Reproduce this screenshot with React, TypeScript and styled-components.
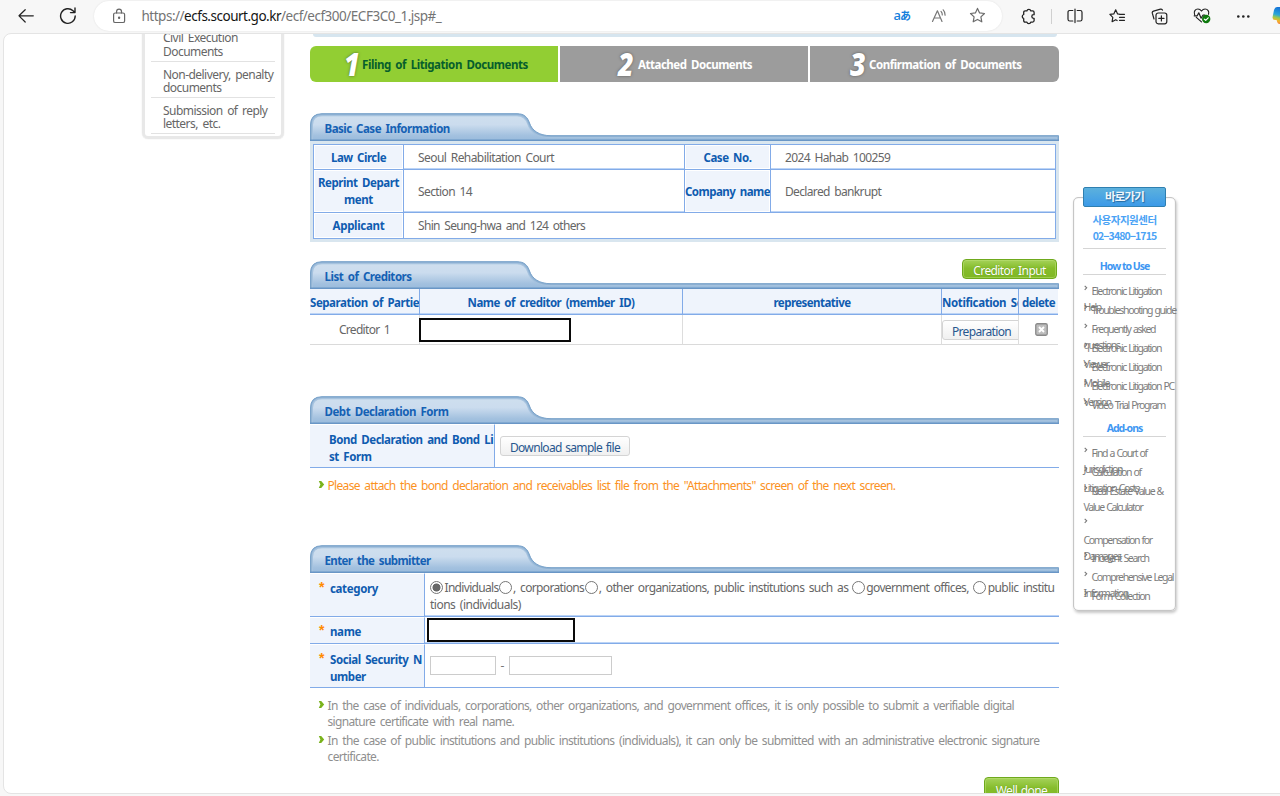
import React from "react";
import styled, { createGlobalStyle } from "styled-components";

const Global = createGlobalStyle`
  * { box-sizing: border-box; }
  body { margin: 0; background: #f7f7f7; font-family: "Noto Sans", "Noto Sans CJK KR", sans-serif; }
`;

const Window = styled.div`
  width: 1280px; height: 796px; overflow: hidden; background: #f7f7f7;
`;

/* ---------- browser bar ---------- */
const Bar = styled.header`
  height: 33px; display: flex; align-items: flex-start;
`;
const NavButtons = styled.div`
  width: 94px; height: 32px; padding-left: 18px; display: flex; flex: none; align-items: center; gap: 25px;
  svg { flex: none; }
`;
const Address = styled.div`
  width: 908px; height: 30px; flex: none; margin-top: 0.5px; border-radius: 15px; background: #fff;
  box-shadow: 0 0 2px rgba(0, 0, 0, 0.1); display: flex; align-items: center; padding: 0 16px 0 18px;
`;
const Url = styled.div`
  margin-left: 15.5px; flex: 1; font-size: 13.5px; letter-spacing: -0.49px; color: #747474; white-space: nowrap;
  b { font-weight: 400; color: #141414; }
`;
const Translate = styled.span`
  font: 500 13px/16px "Noto Sans", "Noto Sans CJK JP", sans-serif; color: #1580dc; letter-spacing: -1px;
  margin-right: 21px;
  small { font-size: 11px; font-weight: 700; }
`;
const AddressIcons = styled.div`
  display: flex; align-items: center; gap: 21px;
`;
const Tools = styled.div`
  display: flex; align-items: center; height: 32px; padding-left: 18px; flex: none;
  svg { flex: none; }
`;
const ToolSlot = styled.span<{ $w: number }>`
  width: ${(p) => p.$w}px; flex: none; display: flex; align-items: center;
`;
const Divider = styled.i`
  width: 1px; height: 15px; background: #d0d0d0; flex: none; margin-right: 15px;
`;

/* ---------- page ---------- */
const Page = styled.div`
  margin-left: 3px; width: 1290px; height: 761px; background: #fff; overflow: hidden;
  border: 1px solid #e4e4e4; border-radius: 8px 0 0 8px;
  display: flex; align-items: flex-start;
`;
const SideBox = styled.nav`
  margin: -12px 0 0 138px; width: 142px; border: 3px solid #e8e8e8; border-radius: 6px;
  padding: 0.5px 6px 2px; flex: none; box-shadow: 0 0 1px #ccc;
`;
const SideItem = styled.div`
  height: 36.3px; padding: 5.8px 0 0 12px; border-bottom: 1px solid #e2e2e2;
  font-size: 12px; line-height: 13.5px; word-spacing: 2px; letter-spacing: -0.54px; color: #666; white-space: nowrap;
`;
const Main = styled.main`
  margin-left: 26px; width: 749px; flex: none; display: flex; flex-direction: column;
`;
const Strip = styled.div`
  height: 2.5px; margin: 0 2px 0 3px; background: #d6e5ef; border-radius: 0 0 4px 4px;
`;
const Steps = styled.div`
  display: flex; gap: 2px; margin-top: 9.5px; height: 36px;
`;
const Step = styled.div<{ $active?: boolean; $pad: number; $w: number }>`
  width: ${(p) => p.$w}px; padding-left: ${(p) => p.$pad}px; display: flex; align-items: center;
  background: ${(p) => (p.$active ? "#92ce33" : "#9c9c9c")};
  color: ${(p) => (p.$active ? "#065e2c" : "#fff")};
  &:first-child { border-radius: 6px 0 0 6px; }
  &:last-child { border-radius: 0 6px 6px 0; }
`;
const StepNumber = styled.span<{ $w: number }>`
  width: ${(p) => p.$w}px; flex: none; font: italic 800 31px/34px "Open Sans", sans-serif; color: #fff;
  text-shadow: 0 0 3px rgba(50, 50, 50, 0.65); transform: scaleX(0.87); transform-origin: 0 50%;
`;

const Text = styled.span<{ $ls: number }>`
  font-size: 12px; line-height: 17px; word-spacing: 2px; white-space: nowrap;
  letter-spacing: ${(p) => p.$ls}px;
`;
const Bold = styled(Text)`
  font-weight: 700; font-size: 11.5px;
`;

const TabWrap = styled.div<{ $mt: number }>`
  margin-top: ${(p) => p.$mt}px; height: 28px; position: relative; flex: none;
  svg { display: block; }
`;
const TabTitle = styled.div`
  position: absolute; left: 14.5px; top: 7.4px; color: #1561b4; line-height: 17px; display: flex;
`;
const GreenButton = styled.button<{ $w: number; $h: number }>`
  width: ${(p) => p.$w}px; height: ${(p) => p.$h}px; flex: none; padding: 3px 0 0; border: 1px solid #6fa91d; border-radius: 4px;
  background: linear-gradient(#a5d25a, #86bd2c 45%, #7fb824); box-shadow: inset 0 0 0 1px rgba(190, 225, 120, 0.5);
  font: 400 12px/16px "Noto Sans", sans-serif; letter-spacing: -0.6px; word-spacing: 1px; color: #fff; white-space: nowrap;
  text-shadow: 0 0 1px rgba(70, 110, 0, 0.6);
`;
const TabButton = styled.div`
  position: absolute; right: 2px; top: -2px; display: flex;
`;

const line = "#82abe8";
const soft = "#bcd4f6";

const CaseFrame = styled.section`
  background: #d9e6ef; padding: 3px 3px 3px 3px; height: 101px;
`;
const CaseGrid = styled.div`
  border: 1px solid ${line}; background: #fff; height: 95px; width: 743px;
  display: grid; grid-template-columns: 90px 280px 87px 1fr; grid-template-rows: 25px 43px 25px;
`;
const Label = styled.div<{ $last?: boolean; $edge?: boolean }>`
  background: #eff4fc; color: #0f5cb0; display: flex; align-items: center; justify-content: center; text-align: center;
  border-right: 1px solid ${line}; border-bottom: ${(p) => (p.$last ? 0 : 1)}px solid ${line};
  border-left: ${(p) => (p.$edge ? 1 : 0)}px solid ${line};
  box-shadow: inset 0 0 0 1px #fff; overflow: hidden;
`;
const Value = styled.div<{ $last?: boolean; $wide?: boolean }>`
  grid-column: ${(p) => (p.$wide ? "span 3" : "auto")}; color: #666; display: flex; align-items: center; padding-left: 14px;
  border-bottom: ${(p) => (p.$last ? 0 : 1)}px solid ${line};
  box-shadow: inset 0 ${(p) => (p.$last ? 0 : -1)}px 0 ${soft};
`;

const Creditors = styled.section`
  display: grid; grid-template-columns: 110px 263px 259px 77px 39px; width: 748px;
`;
const HeadCell = styled.div<{ $last?: boolean; $start?: boolean }>`
  height: 26px; background: #eff4fc; color: #0f5cb0; display: flex; align-items: center; overflow: hidden;
  justify-content: ${(p) => (p.$start ? "flex-start" : "center")}; padding-top: 1px;
  border-right: ${(p) => (p.$last ? 0 : 1)}px solid ${line}; border-bottom: 1px solid ${line};
  box-shadow: inset 0 -1px 0 ${soft};
`;
const BodyCell = styled.div<{ $last?: boolean; $left?: boolean; $open?: boolean }>`
  height: 30px; color: #666; display: flex; align-items: center; overflow: ${(p) => (p.$open ? "visible" : "hidden")};
  justify-content: ${(p) => (p.$left ? "flex-start" : "center")}; padding-left: ${(p) => (p.$last ? 5 : 0)}px;
  border-right: ${(p) => (p.$last ? 0 : 1)}px solid #ddd; border-bottom: 1px solid #dadada;
`;
const Redacted = styled.div<{ $w: number; $h: number; $ml?: number }>`
  width: ${(p) => p.$w}px; height: ${(p) => p.$h}px; flex: none; background: #fff; border: 2px solid #0a0a0a;
  margin-left: ${(p) => p.$ml ?? 0}px;
`;
const GrayButton = styled.button<{ $w: number; $h: number; $ls: number }>`
  width: ${(p) => p.$w}px; height: ${(p) => p.$h}px; flex: none; padding: 3px 0 0; border: 1px solid #d4d4d4; border-radius: 3px;
  background: linear-gradient(#fff, #f0f0f0); color: #28578f; white-space: nowrap;
  font: 400 12px/16px "Noto Sans", sans-serif; letter-spacing: ${(p) => p.$ls}px; word-spacing: 1px;
`;

const FormRow = styled.div<{ $h: number; $label: number; $last?: boolean }>`
  display: grid; grid-template-columns: ${(p) => p.$label}px 1fr; height: ${(p) => p.$h}px;
  border-bottom: 1px solid ${line}; box-shadow: inset 0 ${(p) => (p.$last ? 0 : -1)}px 0 ${soft};
`;
const FormLabel = styled.div<{ $pt: number; $pl: number }>`
  background: #eff4fc; color: #0f5cb0; border-right: 1px solid ${line}; padding: ${(p) => p.$pt}px 0 0 ${(p) => p.$pl}px;
  display: flex; align-items: flex-start; overflow: hidden; border-top: 1px solid #fff;
`;
const Required = styled.span`
  width: 11px; flex: none; color: #ff8c00; font: 700 14px/15px "Liberation Sans", sans-serif;
`;
const FormValue = styled.div<{ $pl: number }>`
  padding-left: ${(p) => p.$pl}px; color: #666; display: flex; align-items: center;
`;
const Radios = styled.div`
  display: flex; flex-direction: column; align-self: flex-start; padding-top: 6px;
`;
const RadioLine = styled.div`
  display: flex; align-items: center; height: 17px;
`;
const Radio = styled.i<{ $on?: boolean; $l?: number; $r?: number }>`
  width: 13px; height: 13px; flex: none; border: 1px solid #767676; border-radius: 50%;
  margin: 0 ${(p) => p.$r ?? 1}px 0 ${(p) => p.$l ?? 0.5}px;
  background: ${(p) => (p.$on ? "radial-gradient(circle, #666 0 3.6px, #fff 4.4px)" : "#fff")};
`;
const Field = styled.input<{ $w: number }>`
  width: ${(p) => p.$w}px; height: 19px; border: 1px solid #ccc; background: #fff; padding: 0;
`;
const Dash = styled.span`
  width: 13px; text-align: center; font-size: 12px; color: #777;
`;
const Note = styled.div<{ $mt: number; $color: string }>`
  margin-top: ${(p) => p.$mt}px; padding-left: 8px; display: flex; align-items: flex-start; color: ${(p) => p.$color};
  svg { flex: none; margin: 3px 2.5px 0 0; }
  span { line-height: 16px; }
`;
const Submit = styled.div`
  display: flex; justify-content: flex-end; margin-top: 12px;
`;

/* ---------- quick menu ---------- */
const Quick = styled.aside`
  margin: 163px 0 0 14px; width: 103px; height: 414px; flex: none; position: relative; padding: 14px 9px 0;
  border: 1px solid #c6c6c6; border-radius: 5px; box-shadow: 1px 2px 3px rgba(0, 0, 0, 0.22), inset 0 0 1px #bbb;
`;
const QuickBadge = styled.div`
  position: absolute; left: 9px; top: -11px; width: 83px; height: 20px; border: 1px solid #2f7fb0; border-radius: 2px;
  background: linear-gradient(#5cb1dd, #3c9ae8); color: #eef6fb; text-align: center; text-shadow: 1px 1px 1px #2568a0;
  font: 700 11.5px/17px "Noto Sans CJK KR", sans-serif; letter-spacing: -0.8px;
`;
const Support = styled.div`
  text-align: center; font: 700 10.5px/16px "Noto Sans CJK KR", sans-serif; color: #4ba3f5; letter-spacing: -0.5px;
  border-bottom: 1px solid #d5d5d5; height: 37px; white-space: nowrap;
  span { letter-spacing: -0.9px; }
`;
const QuickTitle = styled.div<{ $h: number }>`
  height: ${(p) => p.$h}px; border-bottom: 1px solid #d5d5d5; display: flex; align-items: flex-end; justify-content: center;
  font: 700 10.5px/15px "Noto Sans", sans-serif; letter-spacing: -1px; color: #3f97f2; margin-bottom: 8px;
`;
const QuickItem = styled.div<{ $h?: number }>`
  height: ${(p) => p.$h ?? 19}px; font-size: 10.5px; line-height: 16px; letter-spacing: -1.36px; color: #7d7d7d; white-space: nowrap;
  word-spacing: 1px; padding-left: 0.5px; display: flex; align-items: flex-start;
  svg { flex: none; margin: 2px -4px 0 0; }
`;
const QuickLines = styled.div`
  overflow: visible; width: 90px; text-indent: 8px; p { margin: 0; text-indent: 0; }
`;

/* ---------- drawings ---------- */
const ink = { fill: "none", stroke: "#222", strokeWidth: 1.2, strokeLinecap: "round" as const, strokeLinejoin: "round" as const };

const BackIcon = () => (
  <svg width="16" height="16" viewBox="0 0 16 16" {...ink}><path d="M15.3 7.8H1M7.2 1.7 1 7.8l6.2 6.2" /></svg>
);
const ReloadIcon = () => (
  <svg width="18" height="18" viewBox="0 0 18 18" {...ink} strokeWidth={1.4}><path d="M16.2 9A7.3 7.3 0 1 1 14 3.8l1.8 1.7M16 1v4.6h-4.5" /></svg>
);
const LockIcon = () => (
  <svg width="14" height="16" viewBox="0 0 14 16" {...ink} stroke="#666"><rect x="1.6" y="5" width="11" height="9.5" rx="1.6" /><path d="M4.6 5V3.5a2.4 2.4 0 0 1 4.9 0V5" /><circle cx="7.1" cy="9.8" r=".6" fill="#666" /></svg>
);
const ReadIcon = () => (
  <svg width="17" height="16" viewBox="0 0 17 16" {...ink} stroke="#777"><path d="M1.5 13.5 6.4 2.8l4.6 10.7M3.3 10h6.1M10 3.4q1.4 1.5 1.3 3.6M12.2 1.8q2.1 2.2 1.9 5.4" /></svg>
);
const StarIcon = () => (
  <svg width="17" height="17" viewBox="0 0 17 17" {...ink} stroke="#6b6b6b"><path d="M8.5 1.4l2.1 4.5 4.9.6-3.6 3.4.9 4.9-4.3-2.4-4.3 2.4.9-4.9L1.5 6.5l4.9-.6z" /></svg>
);
const PuzzleIcon = () => (
  <svg width="17" height="17" viewBox="0 0 17 17" {...ink} strokeWidth={1.3}>
    <path d="M5.2 2.9H6.9a2 2 0 0 1 3.9 0h1.8q1.5 0 1.5 1.5v2.3h-.5a1.8 1.8 0 0 0 0 3.6h.5v2.3q0 1.500-1.500 1.500h-1.800a2 2 0 0 1-3.900 0H5.200q-1.500 0-1.500-1.500V10.500a2.100 2.100 0 0 1 0-4V4.400q0-1.500 1.500-1.500z" />
  </svg>
);
const SplitIcon = () => (
  <svg width="16" height="16" viewBox="0 0 16 16" {...ink}><path d="M5.8 2.5H2.8Q1 2.5 1 4.3v6.9Q1 13 2.8 13h3M10.2 2.5h3q1.8 0 1.8 1.8v6.9q0 1.8-1.8 1.8h-3M8 1v13.6" /></svg>
);
const FavoritesIcon = () => (
  <svg width="17" height="16" viewBox="0 0 17 16" {...ink}><path d="M10.2 6.2 8.6 5.9 6.7 1.8 4.8 5.9.9 6.4l2.9 2.9-.7 4.4 3.6-2 1.4.8M10.5 6.3h5M10.5 9.3h5M10.5 12.3h5" /></svg>
);
const CollectionsIcon = () => (
  <svg width="17" height="17" viewBox="0 0 17 17" {...ink}><rect x="5" y="5" width="10.8" height="10.8" rx="2.2" /><path d="M10.4 7.8v5.2M7.8 10.4H13M3 11 1.3 5.2q-.4-1.6 1.2-2.1l7-2q1.6-.4 2 1.1" /></svg>
);
const HealthIcon = () => (
  <svg width="19" height="18" viewBox="0 0 19 18" {...ink}>
    <path d="M1.6 7.6C.4 4.5 2.4 2 4.9 2 6.5 2 7.6 2.8 8.5 4c.9-1.2 2-2 3.6-2 2.5 0 4.5 2.5 3.4 5.3M3.3 10.4 8.5 14.9M1.2 8.8h3l1.6-3 2.3 5.4 1.8-3h2" />
    <circle cx="13.2" cy="12" r="4.2" fill="#0e7a0d" stroke="none" /><path d="m11.3 12.1 1.4 1.3 2.5-2.6" stroke="#fff" />
  </svg>
);
const DotsIcon = () => (
  <svg width="15" height="5" viewBox="0 0 15 5"><g fill="#222"><circle cx="2.3" cy="2.5" r="1.3" /><circle cx="7.3" cy="2.5" r="1.3" /><circle cx="12.3" cy="2.5" r="1.3" /></g></svg>
);
const CopilotIcon = () => (
  <svg width="18" height="20" viewBox="0 0 18 20">
    <defs><linearGradient id="cp" x1="0.2" y1="0" x2="0" y2="1"><stop offset="0" stopColor="#1675d8" /><stop offset=".4" stopColor="#2aa6d9" /><stop offset=".58" stopColor="#9cc94c" /><stop offset=".75" stopColor="#f6b429" /><stop offset="1" stopColor="#f0604c" /></linearGradient></defs>
    <path d="M5 1h9l-3 17H7.5q-1.8 0-2.3-2L4.600 14H3Q.2 14 .6 11L2 4Q2.800 1 5 1z" fill="url(#cp)" />
  </svg>
);
const CheckArrow = () => (
  <svg width="7" height="8" viewBox="0 0 7 8"><path d="M.8 0h2.4L6.2 3.5 3.2 7H.8l1.6-3.5z" fill="#7ab31c" /></svg>
);
const SmallArrow = () => (
  <svg width="4" height="6" viewBox="0 0 4 6"><path d="M.7.8 2.7 2.8.7 4.8" fill="none" stroke="#777" strokeWidth="1.1" /></svg>
);
const DeleteIcon = () => (
  <svg width="13" height="13" viewBox="0 0 13 13"><rect x=".75" y=".75" width="11.5" height="11.5" rx="1.5" fill="#bdbdbd" stroke="#8a8a8a" strokeWidth="1.3" /><path d="m4 4 5 5M9 4 4 9" stroke="#fff" strokeWidth="1.9" /></svg>
);

const tabPath = "M.5 28V12Q.5 .7 12 .7H207C214 .7 217.5 4 219.5 10 222 17.5 229 22.7 241 22.7H748.5V28";
function Tab({ title, mt, ls, children }: { title: string; mt: number; ls: number; children?: React.ReactNode }) {
  return (
    <TabWrap $mt={mt}>
      <svg width="749" height="28" viewBox="0 0 749 28">
        <defs>
          <linearGradient id="tab" x1="0" y1="0" x2="0" y2="1"><stop offset="0" stopColor="#cfdfee" /><stop offset=".4" stopColor="#cbdcee" /><stop offset=".8" stopColor="#a3c1df" /><stop offset="1" stopColor="#98badc" /></linearGradient>
          <clipPath id="tabclip"><path d={tabPath + "z"} /></clipPath>
        </defs>
        <path d={tabPath + "z"} fill="url(#tab)" />
        <g clipPath="url(#tabclip)" fill="none">
          <path d={tabPath} stroke="#a5c2de" strokeWidth="5" />
          <path d={tabPath} stroke="#8fb2d4" strokeWidth="2.6" />
        </g>
        <path d={tabPath} fill="none" stroke="#7aa3ca" strokeWidth="1" />
        <path d="M0 27.2H749" stroke="#6996c6" strokeWidth="1.5" />
      </svg>
      <TabTitle><Bold $ls={ls}>{title}</Bold></TabTitle>
      {children}
    </TabWrap>
  );
}

function Item({ first, rest, h }: { first: string; rest?: string[]; h?: number }) {
  return (
    <QuickItem $h={h}>
      <SmallArrow />
      <QuickLines>{first || "\u00a0"}{(rest ?? []).map((r) => <p key={r}>{r}</p>)}</QuickLines>
    </QuickItem>
  );
}

export default function App() {
  return (
    <Window>
      <Global />
      <Bar>
        <NavButtons><BackIcon /><ReloadIcon /></NavButtons>
        <Address>
          <LockIcon />
          <Url>https://<b>ecfs.scourt.go.kr</b>/ecf/ecf300/ECF3C0_1.jsp#_</Url>
          <Translate>a<small>あ</small></Translate>
          <AddressIcons><ReadIcon /><StarIcon /></AddressIcons>
        </Address>
        <Tools>
          <ToolSlot $w={31}><PuzzleIcon /></ToolSlot>
          <Divider />
          <ToolSlot $w={42}><SplitIcon /></ToolSlot>
          <ToolSlot $w={42}><FavoritesIcon /></ToolSlot>
          <ToolSlot $w={42}><CollectionsIcon /></ToolSlot>
          <ToolSlot $w={43}><HealthIcon /></ToolSlot>
          <ToolSlot $w={36}><DotsIcon /></ToolSlot>
          <CopilotIcon />
        </Tools>
      </Bar>
      <Page>
        <SideBox>
          <SideItem>Civil Execution<br />Documents</SideItem>
          <SideItem>Non-delivery, penalty<br />documents</SideItem>
          <SideItem>Submission of reply<br />letters, etc.</SideItem>
        </SideBox>
        <Main>
          <Strip />
          <Steps>
            <Step $w={248} $pad={34} $active><StepNumber $w={18}>1</StepNumber><Bold $ls={-0.43}>Filing of Litigation Documents</Bold></Step>
            <Step $w={248} $pad={58}><StepNumber $w={20}>2</StepNumber><Bold $ls={-0.48}>Attached Documents</Bold></Step>
            <Step $w={249} $pad={40}><StepNumber $w={19}>3</StepNumber><Bold $ls={-0.42}>Confirmation of Documents</Bold></Step>
          </Steps>

          <Tab title="Basic Case Information" mt={31} ls={-0.51} />
          <CaseFrame>
            <CaseGrid>
              <Label><Bold $ls={-0.51}>Law Circle</Bold></Label>
              <Value><Text $ls={-0.58}>Seoul Rehabilitation Court</Text></Value>
              <Label $edge><Bold $ls={-0.46}>Case No.</Bold></Label>
              <Value><Text $ls={-0.64}>2024 Hahab 100259</Text></Value>
              <Label><Bold $ls={-0.45}>Reprint Depart<br />ment</Bold></Label>
              <Value><Text $ls={-0.6}>Section 14</Text></Value>
              <Label $edge><Bold $ls={-0.53}>Company name</Bold></Label>
              <Value><Text $ls={-0.65}>Declared bankrupt</Text></Value>
              <Label $last><Bold $ls={-0.3}>Applicant</Bold></Label>
              <Value $last $wide><Text $ls={-0.67}>Shin Seung-hwa and 124 others</Text></Value>
            </CaseGrid>
          </CaseFrame>

          <Tab title="List of Creditors" mt={19} ls={-0.48}>
            <TabButton><GreenButton $w={95} $h={20}>Creditor Input</GreenButton></TabButton>
          </Tab>
          <Creditors>
            <HeadCell $start><Bold $ls={-0.46}>Separation of Parties</Bold></HeadCell>
            <HeadCell><Bold $ls={-0.5}>Name of creditor (member ID)</Bold></HeadCell>
            <HeadCell><Bold $ls={-0.55}>representative</Bold></HeadCell>
            <HeadCell $start><Bold $ls={-0.38}>Notification Service</Bold></HeadCell>
            <HeadCell $last><Bold $ls={-0.53}>delete</Bold></HeadCell>
            <BodyCell><Text $ls={-0.7}>Creditor 1</Text></BodyCell>
            <BodyCell $left $open><Redacted $w={152} $h={24} $ml={-1} /></BodyCell>
            <BodyCell />
            <BodyCell $left><GrayButton $w={79} $h={20} $ls={-0.67}>Preparation</GrayButton></BodyCell>
            <BodyCell $last><DeleteIcon /></BodyCell>
          </Creditors>

          <Tab title="Debt Declaration Form" mt={51} ls={-0.47} />
          <FormRow $h={44} $label={185} $last>
            <FormLabel $pt={6} $pl={19}><Bold $ls={-0.46}>Bond Declaration and Bond Li<br />st Form</Bold></FormLabel>
            <FormValue $pl={5}><GrayButton $w={130} $h={20} $ls={-0.66}>Download sample file</GrayButton></FormValue>
          </FormRow>
          <Note $mt={10} $color="#fb921f">
            <CheckArrow />
            <Text $ls={-0.668}>Please attach the bond declaration and receivables list file from the "Attachments" screen of the next screen.</Text>
          </Note>

          <Tab title="Enter the submitter" mt={51} ls={-0.6} />
          <FormRow $h={44} $label={115}>
            <FormLabel $pt={6} $pl={9}><Required>*</Required><Bold $ls={-0.35}>category</Bold></FormLabel>
            <FormValue $pl={5}>
              <Radios>
                <RadioLine>
                  <Radio $on $l={0} $r={1.5} /><Text $ls={-0.68}>Individuals</Text>
                  <Radio /><Text $ls={-0.65}>, corporations</Text>
                  <Radio /><Text $ls={-0.63}>, other organizations, public institutions such as</Text>
                  <Radio $l={4} $r={1} /><Text $ls={-0.64}>government offices,</Text>
                  <Radio $l={4} $r={2} /><Text $ls={-0.57}>public institu</Text>
                </RadioLine>
                <Text $ls={-0.52}>tions (individuals)</Text>
              </Radios>
            </FormValue>
          </FormRow>
          <FormRow $h={27} $label={115}>
            <FormLabel $pt={5} $pl={9}><Required>*</Required><Bold $ls={-0.35}>name</Bold></FormLabel>
            <FormValue $pl={2}><Redacted $w={148} $h={24} /></FormValue>
          </FormRow>
          <FormRow $h={44} $label={115} $last>
            <FormLabel $pt={6} $pl={9}><Required>*</Required><Bold $ls={-0.43}>Social Security N<br />umber</Bold></FormLabel>
            <FormValue $pl={5}><Field $w={66} /><Dash>-</Dash><Field $w={103} /></FormValue>
          </FormRow>
          <Note $mt={10} $color="#8f8f8f">
            <CheckArrow />
            <Text $ls={-0.653}>In the case of individuals, corporations, other organizations, and government offices, it is only possible to submit a verifiable digital<br />signature certificate with real name.</Text>
          </Note>
          <Note $mt={3} $color="#8f8f8f">
            <CheckArrow />
            <Text $ls={-0.634}>In the case of public institutions and public institutions (individuals), it can only be submitted with an administrative electronic signature<br />certificate.</Text>
          </Note>
          <Submit><GreenButton $w={75} $h={24}>Well done</GreenButton></Submit>
        </Main>
        <Quick>
          <QuickBadge>바로가기</QuickBadge>
          <Support>사용자지원센터<br /><span>02−3480−1715</span></Support>
          <QuickTitle $h={26}>How to Use</QuickTitle>
          <Item first="Electronic Litigation" rest={["Help"]} />
          <Item first="Troubleshooting guide" />
          <Item first="Frequently asked" rest={["questions"]} />
          <Item first="Electronic Litigation" rest={["Viewer"]} />
          <Item first="Electronic Litigation" rest={["Mobile"]} />
          <Item first="Electronic Litigation PC" rest={["Version"]} />
          <Item first="Video Trial Program" />
          <QuickTitle $h={21}>Add-ons</QuickTitle>
          <Item first="Find a Court of" rest={["Jurisdiction"]} />
          <Item first="Calculation of" rest={["Litigation Costs"]} />
          <Item first="Real Estate Value &" rest={["Value Calculator"]} h={33} />
          <Item first="" rest={["Compensation for", "Damages"]} h={34} />
          <Item first="Incident Search" />
          <Item first="Comprehensive Legal" rest={["Information"]} />
          <Item first="Form Collection" />
        </Quick>
      </Page>
    </Window>
  );
}
